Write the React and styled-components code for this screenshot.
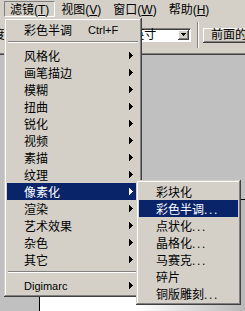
import { createGlobalStyle, styled } from 'styled-components'

const GlobalStyle = createGlobalStyle`
  html, body {
    margin: 0;
    padding: 0;
    overflow: hidden;
    background: #d4d0c8;
  }
`

const mainItems = [
  { label: '彩色半调', shortcut: 'Ctrl+F' },
  'sep',
  { label: '风格化', sub: true },
  { label: '画笔描边', sub: true },
  { label: '模糊', sub: true },
  { label: '扭曲', sub: true },
  { label: '锐化', sub: true },
  { label: '视频', sub: true },
  { label: '素描', sub: true },
  { label: '纹理', sub: true },
  { label: '像素化', sub: true, active: true },
  { label: '渲染', sub: true },
  { label: '艺术效果', sub: true },
  { label: '杂色', sub: true },
  { label: '其它', sub: true },
  'sep',
  { label: 'Digimarc', sub: true, latin: true },
]

const subItems = [
  { label: '彩块化' },
  { label: '彩色半调', dots: true, active: true },
  { label: '点状化', dots: true },
  { label: '晶格化', dots: true },
  { label: '马赛克', dots: true },
  { label: '碎片' },
  { label: '铜版雕刻', dots: true },
]

const Arrow = () => (
  <svg width="4" height="7" viewBox="0 0 4 7" shapeRendering="crispEdges">
    <path d="M0 0h1v7H0zM1 1h1v5H1zM2 2h1v3H2zM3 3h1v1H3z" fill="currentColor" />
  </svg>
)

const App = () => {
  return (
    <Screen>
      <GlobalStyle />
      <MenuBar>
        <MenuTitle $open>滤镜(<u>T</u>)</MenuTitle>
        <MenuTitle>视图(<u>V</u>)</MenuTitle>
        <MenuTitle>窗口(<u>W</u>)</MenuTitle>
        <MenuTitle>帮助(<u>H</u>)</MenuTitle>
      </MenuBar>

      <Toolbar>
        <Stub>度</Stub>
        <Combo>
          <ComboText>像素/英寸</ComboText>
          <DropButton>
            <svg width="5" height="3" viewBox="0 0 5 3" shapeRendering="crispEdges">
              <path d="M0 0h5v1H0zM1 1h3v1H1zM2 2h1v1H2z" fill="#000" />
            </svg>
          </DropButton>
        </Combo>
        <ToolSep />
        <ToolButton>前面的图像</ToolButton>
      </Toolbar>

      <Workspace>
        <DocWindow />
      </Workspace>

      <Menu $left={4} $top={18} $width={138}>
        {mainItems.map((item, i) =>
          item === 'sep' ? (
            <Separator key={i} />
          ) : (
            <Row key={i} $active={item.active}>
              <Label $latin={item.latin} $wide={!!item.shortcut}>{item.label}</Label>
              {item.shortcut && <Shortcut>{item.shortcut}</Shortcut>}
              {item.sub && (
                <ArrowBox>
                  <Arrow />
                </ArrowBox>
              )}
            </Row>
          )
        )}
      </Menu>

      <Menu $left={136} $top={180} $width={105}>
        {subItems.map((item, i) => (
          <Row key={i} $active={item.active}>
            <Label>
              {item.label}
              {item.dots && <Dots>...</Dots>}
            </Label>
          </Row>
        ))}
      </Menu>
    </Screen>
  )
}

export default App

const Screen = styled.div`
  position: relative;
  width: 245px;
  height: 311px;
  overflow: hidden;
  display: flex;
  flex-direction: column;
  background: #d4d0c8;
  font-family: 'Liberation Sans', 'Noto Sans CJK SC', sans-serif;
  font-size: 12px;
  color: #000;
`
const MenuBar = styled.div`
  height: 18px;
  display: flex;
  align-items: flex-start;
  padding-left: 4px;
  flex-shrink: 0;
`
const MenuTitle = styled.div`
  margin-top: 1px;
  height: 16px;
  line-height: 16px;
  padding: 0 5px;
  border: 1px solid transparent;
  box-sizing: border-box;
  white-space: nowrap;
  border-color: ${(p) => (p.$open ? '#808080 #fff #fff #808080' : 'transparent')};
  u {
    text-decoration: underline;
    text-underline-offset: 1px;
  }
`
const Toolbar = styled.div`
  height: 35px;
  box-sizing: border-box;
  padding-top: 10px;
  display: flex;
  align-items: flex-start;
  flex-shrink: 0;
`
const Stub = styled.div`
  margin-left: -7px;
  margin-top: -2px;
  width: 12px;
  flex-shrink: 0;
  font-family: 'Noto Sans CJK SC', sans-serif;
  line-height: 16px;
`
const Combo = styled.div`
  margin-left: 97px;
  width: 89px;
  height: 14px;
  flex-shrink: 0;
  box-sizing: border-box;
  background: #fff;
  border: 1px solid;
  border-color: #808080 #fff #fff #808080;
  box-shadow: inset 1px 1px #404040;
  display: flex;
  align-items: center;
  justify-content: space-between;
  padding: 0 1px 0 2px;
`
const ComboText = styled.span`
  line-height: 12px;
  white-space: nowrap;
`
const DropButton = styled.div`
  width: 11px;
  height: 10px;
  box-sizing: border-box;
  background: #d4d0c8;
  box-shadow: inset -1px -1px #404040, inset 1px 1px #fff, inset -2px -2px #808080;
  display: flex;
  align-items: center;
  justify-content: center;
  padding-bottom: 1px;
`
const ToolSep = styled.div`
  margin-left: 6px;
  margin-top: -6px;
  height: 26px;
  width: 0;
  border-left: 1px solid #808080;
  border-right: 1px solid #fff;
  flex-shrink: 0;
`
const ToolButton = styled.div`
  margin-left: 4px;
  height: 15px;
  line-height: 15px;
  padding: 0 8px;
  flex-shrink: 0;
  white-space: nowrap;
  box-shadow: inset -1px -1px #404040, inset 1px 1px #fff, inset -2px -2px #808080;
`
const Workspace = styled.div`
  position: relative;
  flex: 1;
  background: #c0c0c0;
  border-top: 1px solid #808080;
  box-shadow: inset 0 1px #404040;
`
const DocWindow = styled.div`
  position: absolute;
  left: 39px;
  top: 145px;
  right: -10px;
  bottom: -10px;
  border: 1px solid #000;
  background: linear-gradient(to right, #fff 0, #fff 98px, #b8b8b8 206px);
`
const Menu = styled.div`
  position: absolute;
  left: ${(p) => p.$left}px;
  top: ${(p) => p.$top}px;
  width: ${(p) => p.$width}px;
  box-sizing: border-box;
  padding: 3px;
  background: #d4d0c8;
  box-shadow: inset -1px -1px #404040, inset 1px 1px #d4d0c8, inset -2px -2px #808080, inset 2px 2px #fff;
`
const Row = styled.div`
  height: 17px;
  display: flex;
  align-items: center;
  padding: 0 6px 0 17px;
  background: ${(p) => (p.$active ? '#0a246a' : 'transparent')};
  color: ${(p) => (p.$active ? '#fff' : '#000')};
`
const Label = styled.span`
  white-space: nowrap;
  min-width: ${(p) => (p.$wide ? '64px' : '0')};
  font-size: ${(p) => (p.$latin ? '11px' : '12px')};
`
const Shortcut = styled.span`
  font-size: 11px;
  white-space: nowrap;
`
const Dots = styled.span`
  letter-spacing: 1.6px;
`
const ArrowBox = styled.span`
  margin-left: auto;
  display: flex;
`
const Separator = styled.div`
  margin: 3px 1px 4px;
  border-top: 1px solid #808080;
  border-bottom: 1px solid #fff;
`
